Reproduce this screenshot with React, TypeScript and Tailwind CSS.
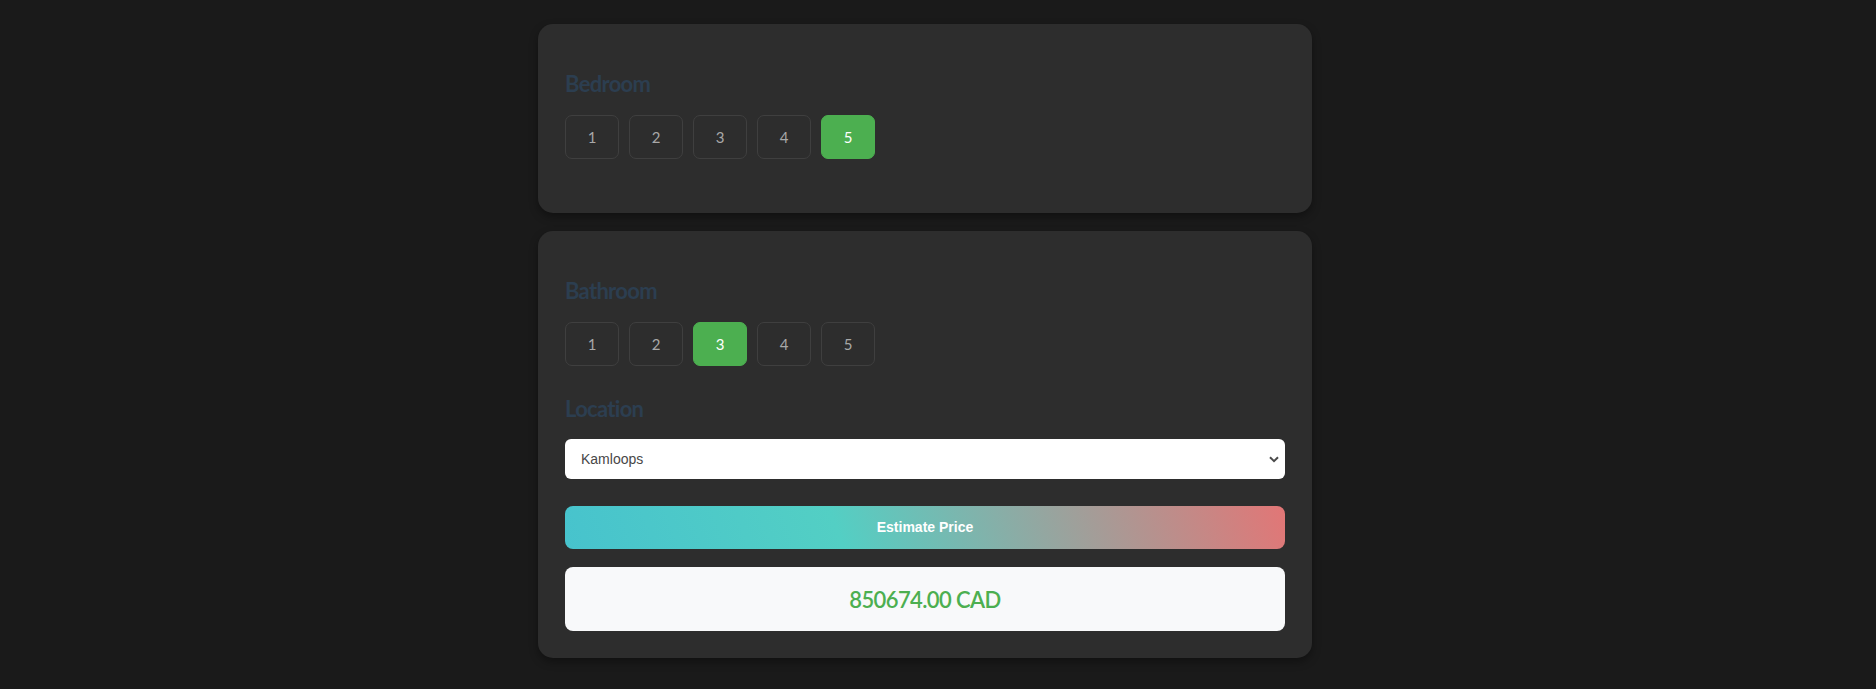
import React from "react";

const lato = "font-['Lato','Noto_Sans',sans-serif]";

function NumberRow({ selected }: { selected: number }) {
  return (
    <div className="flex gap-[10px]">
      {[1, 2, 3, 4, 5].map((n) => (
        <div
          key={n}
          className={
            n === selected
              ? `flex h-[44px] w-[54px] items-center justify-center rounded-[7px] border border-[#4caf50] bg-[#4caf50] text-[15px] text-white ${lato}`
              : `flex h-[44px] w-[54px] items-center justify-center rounded-[7px] border border-[#3f3f3f] text-[15px] text-[#a8a8a8] ${lato}`
          }
        >
          {n}
        </div>
      ))}
    </div>
  );
}

function Label({ children }: { children: React.ReactNode }) {
  return (
    <div
      className={`h-[32px] text-[22px] font-bold leading-[32px] tracking-[-0.7px] text-[#2c3e50] ${lato}`}
    >
      {children}
    </div>
  );
}

export default function App() {
  return (
    <div className="min-h-[689px] bg-[#1a1a1a] pt-[24px] pb-[32px]">
      <div className="ml-[538px] flex w-[774px] flex-col gap-[18px]">
        <div className="flex flex-col rounded-[15px] bg-[#2d2d2d] p-[27px] shadow-[0_4px_8px_rgba(0,0,0,0.35)]">
          <div className="h-[17px]" />
          <Label>Bedroom</Label>
          <div className="h-[15px]" />
          <NumberRow selected={5} />
          <div className="h-[27px]" />
        </div>

        <div className="flex flex-col rounded-[15px] bg-[#2d2d2d] p-[27px] shadow-[0_4px_8px_rgba(0,0,0,0.35)]">
          <div className="h-[17px]" />
          <Label>Bathroom</Label>
          <div className="h-[15px]" />
          <NumberRow selected={3} />
          <div className="h-[27px]" />
          <Label>Location</Label>
          <div className="h-[14px]" />
          <div className="flex h-[40px] items-center justify-between rounded-[6px] bg-white pl-[16px] pr-[6px] font-['Liberation_Sans',Arial,sans-serif] text-[14px] text-[#474747]">
            <span>Kamloops</span>
            <svg width="10" height="7" viewBox="0 0 10 7" className="mt-[1px]">
              <path
                d="M1 1.2 L5 5.2 L9 1.2"
                fill="none"
                stroke="#4a4a4a"
                strokeWidth="2"
              />
            </svg>
          </div>
          <div className="h-[27px]" />
          <div className="flex h-[43px] items-center justify-center rounded-[8px] bg-[linear-gradient(70deg,#47c3cd_0%,#53cfc4_38%,#e27676_100%)] font-['Liberation_Sans',Arial,sans-serif] text-[14px] font-bold text-white">
            Estimate Price
          </div>
          <div className="h-[18px]" />
          <div
            className={`flex h-[64px] items-center justify-center rounded-[8px] bg-[#f8f9fa] text-[22px] font-semibold tracking-[-0.6px] text-[#4caf50] ${lato}`}
          >
            850674.00 CAD
          </div>
        </div>
      </div>
    </div>
  );
}
